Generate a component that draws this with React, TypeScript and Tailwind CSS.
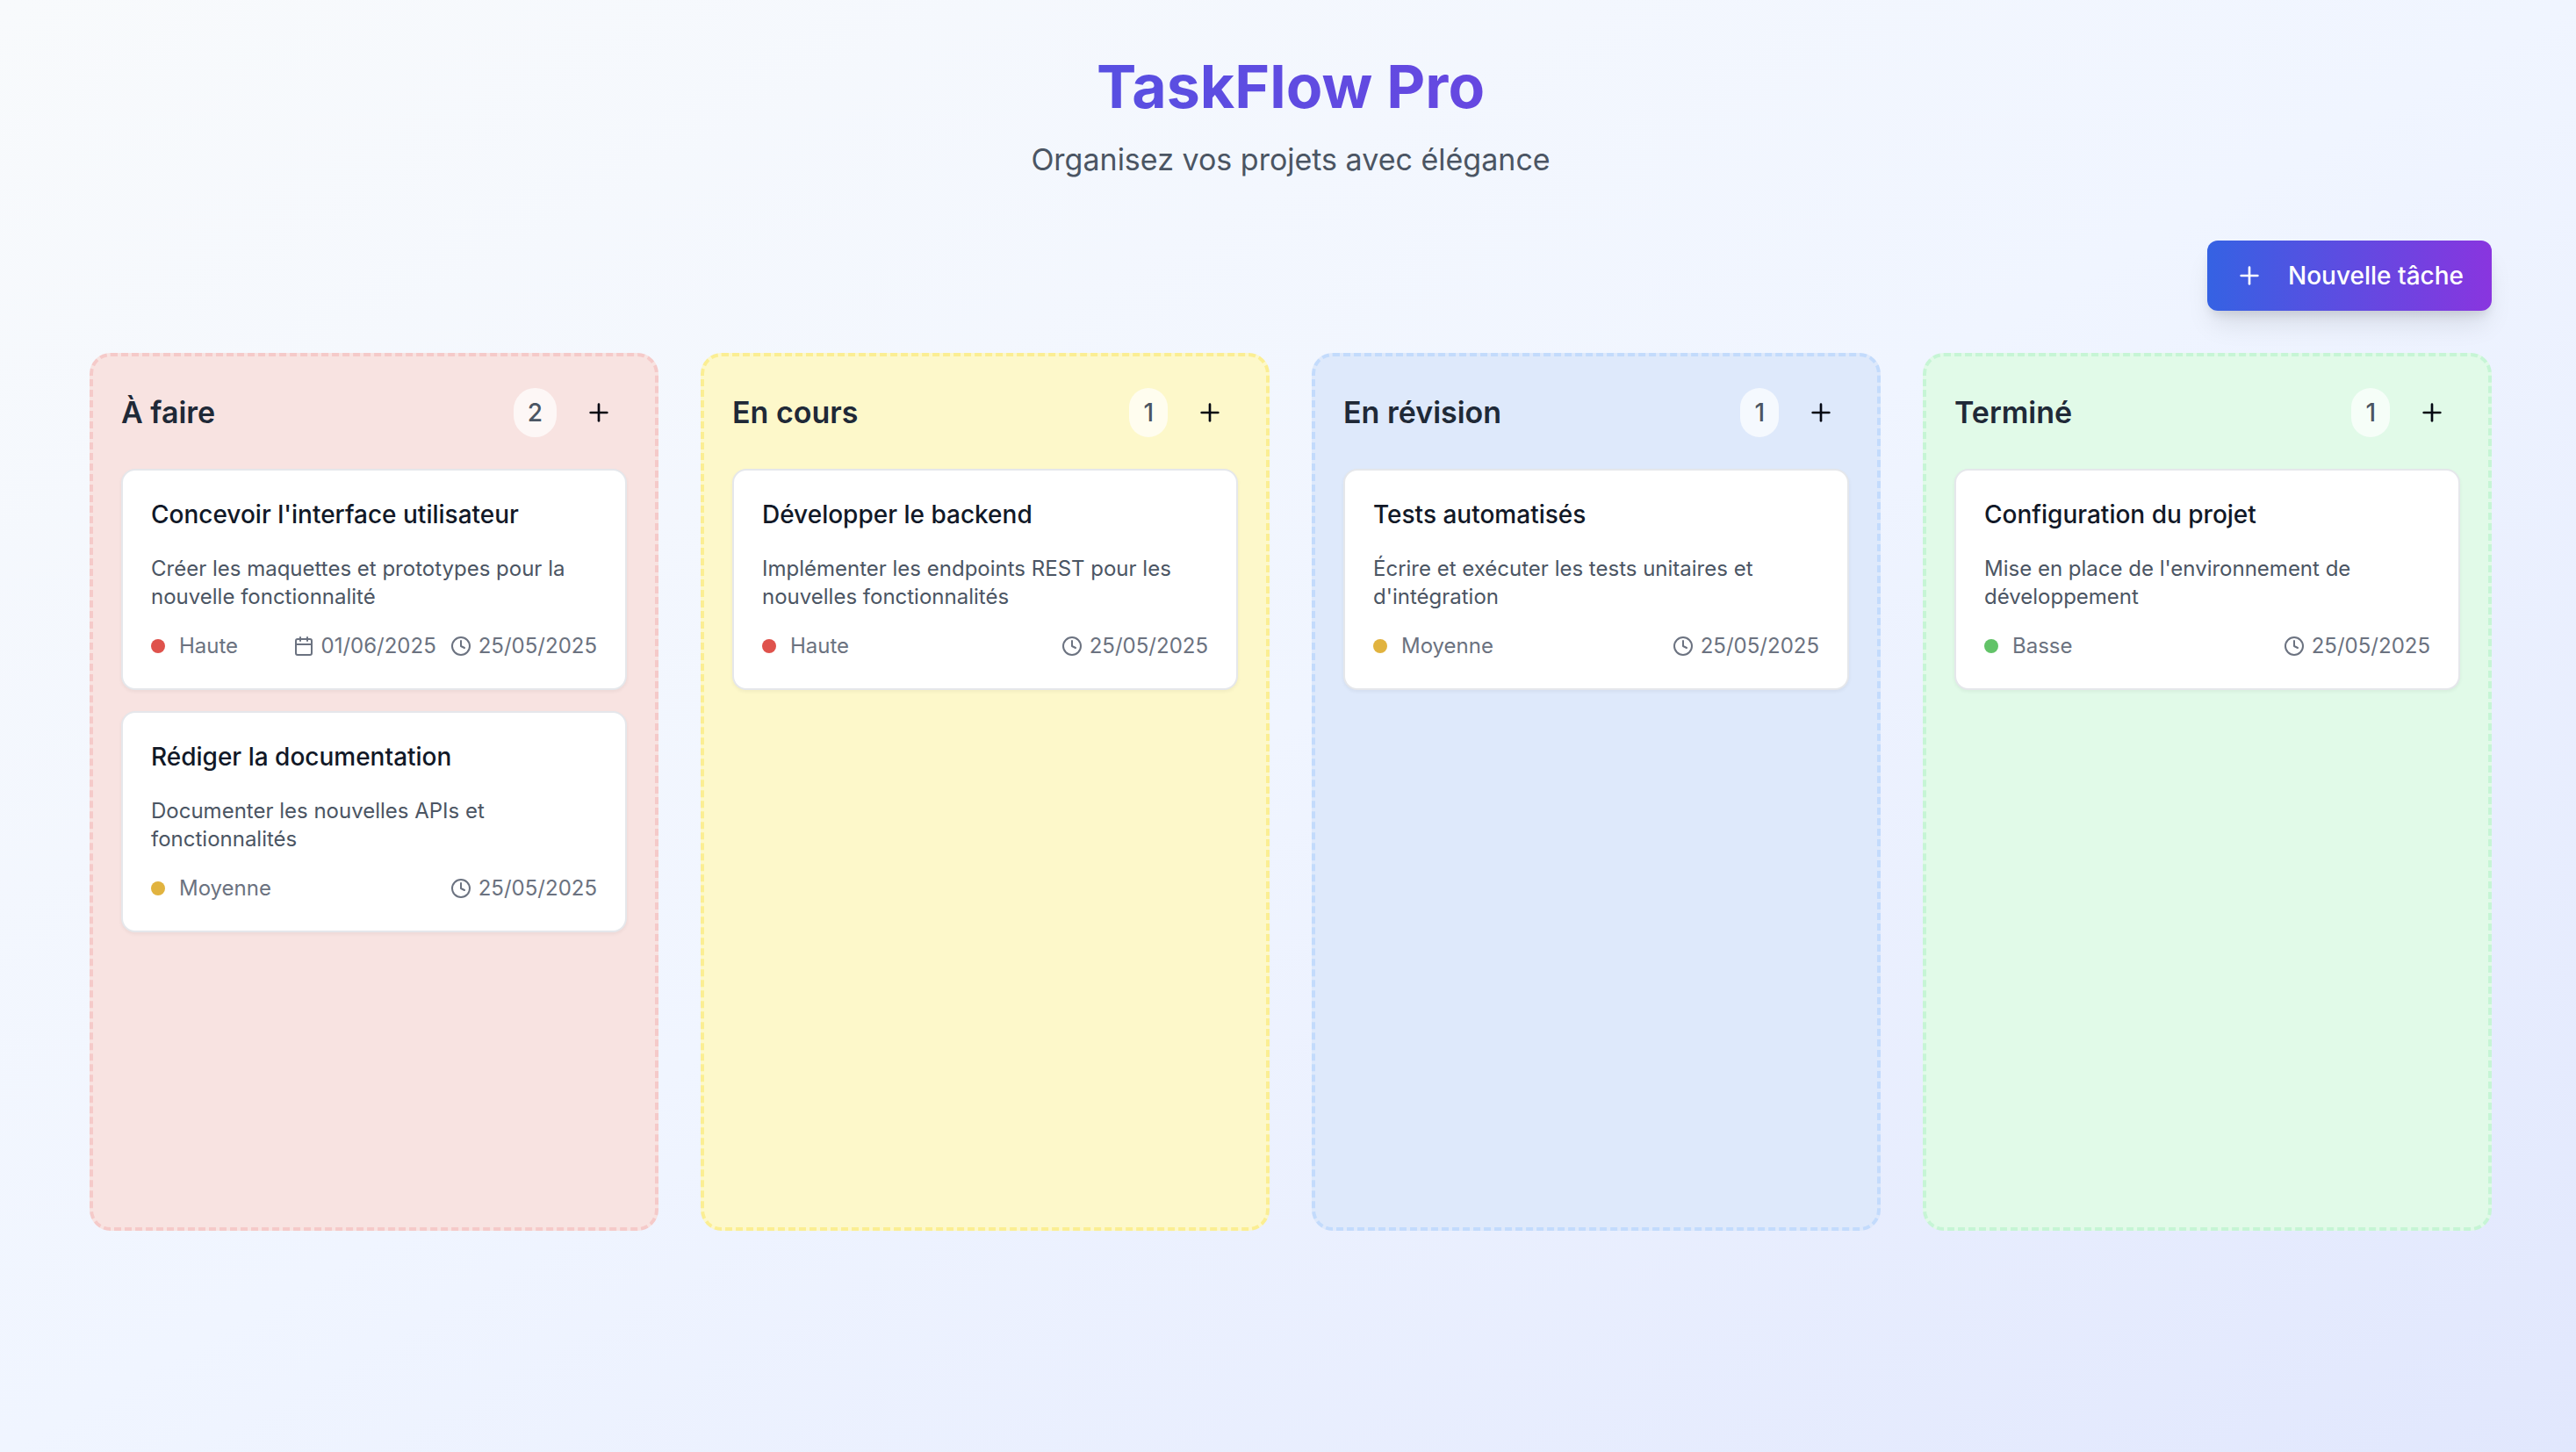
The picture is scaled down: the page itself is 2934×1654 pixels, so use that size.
import { Calendar, Clock, Plus } from "lucide-react";

type Priority = "haute" | "moyenne" | "basse";

interface Task {
  title: string;
  description: string;
  priority: Priority;
  due?: string;
  created: string;
}

interface Column {
  id: string;
  title: string;
  tone: string;
  tasks: Task[];
}

const priorities: Record<Priority, { label: string; dot: string }> = {
  haute: { label: "Haute", dot: "bg-[#df524c]" },
  moyenne: { label: "Moyenne", dot: "bg-[#e1b33f]" },
  basse: { label: "Basse", dot: "bg-[#62c368]" },
};

const columns: Column[] = [
  {
    id: "todo",
    title: "À faire",
    tone: "bg-[#f8e3e1] border-[#f5cac9]",
    tasks: [
      {
        title: "Concevoir l'interface utilisateur",
        description: "Créer les maquettes et prototypes pour la nouvelle fonctionnalité",
        priority: "haute",
        due: "01/06/2025",
        created: "25/05/2025",
      },
      {
        title: "Rédiger la documentation",
        description: "Documenter les nouvelles APIs et fonctionnalités",
        priority: "moyenne",
        created: "25/05/2025",
      },
    ],
  },
  {
    id: "doing",
    title: "En cours",
    tone: "bg-[#fdf8ca] border-[#fbee93]",
    tasks: [
      {
        title: "Développer le backend",
        description: "Implémenter les endpoints REST pour les nouvelles fonctionnalités",
        priority: "haute",
        created: "25/05/2025",
      },
    ],
  },
  {
    id: "review",
    title: "En révision",
    tone: "bg-[#dee9fb] border-[#c3dbfc]",
    tasks: [
      {
        title: "Tests automatisés",
        description: "Écrire et exécuter les tests unitaires et d'intégration",
        priority: "moyenne",
        created: "25/05/2025",
      },
    ],
  },
  {
    id: "done",
    title: "Terminé",
    tone: "bg-[#e1fae8] border-[#c6f5d5]",
    tasks: [
      {
        title: "Configuration du projet",
        description: "Mise en place de l'environnement de développement",
        priority: "basse",
        created: "25/05/2025",
      },
    ],
  },
];

function TaskCard({ task }: { task: Task }) {
  const priority = priorities[task.priority];
  return (
    <article className="rounded-2xl border-2 border-gray-200 bg-white p-8 shadow-[0_2px_4px_rgba(0,0,0,0.05)]">
      <h3 className="text-[28px] leading-9 font-medium text-[#111827]">{task.title}</h3>
      <p className="mt-7 text-[24px] leading-8 text-[#4b5563]">{task.description}</p>
      <div className="mt-6 flex items-center justify-between text-[24px] leading-8 text-[#6b7280]">
        <div className="flex items-center gap-4">
          <span className={`size-4 rounded-full ${priority.dot}`} />
          <span>{priority.label}</span>
        </div>
        <div className="flex items-center gap-4">
          {task.due && (
            <div className="flex items-center gap-2">
              <Calendar className="size-6" />
              <time>{task.due}</time>
            </div>
          )}
          <div className="flex items-center gap-2">
            <Clock className="size-6" />
            <time>{task.created}</time>
          </div>
        </div>
      </div>
    </article>
  );
}

function BoardColumn({ column }: { column: Column }) {
  return (
    <section className={`min-h-[1000px] rounded-3xl border-4 border-dashed p-8 ${column.tone}`}>
      <header className="mb-8 flex items-center justify-between">
        <h2 className="text-[34px] leading-[56px] font-semibold text-[#1f2937]">{column.title}</h2>
        <div className="flex items-center gap-4">
          <span className="rounded-full bg-white/70 px-4 py-2 text-[28px] leading-10 font-medium text-[#4b5563]">
            {column.tasks.length}
          </span>
          <button
            type="button"
            aria-label={`Ajouter une tâche dans ${column.title}`}
            className="flex size-16 items-center justify-center rounded-xl text-gray-950"
          >
            <Plus className="size-8" />
          </button>
        </div>
      </header>
      <div className="flex flex-col gap-6">
        {column.tasks.map((task) => (
          <TaskCard key={task.title} task={task} />
        ))}
      </div>
    </section>
  );
}

export default function App() {
  return (
    <main className="min-h-screen bg-linear-to-br/srgb from-[#f8fafc] via-[#f0f5ff] to-[#e1e7fd] pt-[54px] pr-24 pb-16 pl-[102px] font-['Inter',sans-serif]">
      <header className="mb-16 text-center">
        <h1 className="bg-linear-to-r/srgb from-[#3562e3] to-[#8935df] bg-clip-text text-[68px] leading-[88px] font-bold text-transparent">
          TaskFlow Pro
        </h1>
        <p className="mt-3 text-[34px] leading-[56px] text-[#4b5563]">Organisez vos projets avec élégance</p>
      </header>
      <div className="mb-12 flex justify-end">
        <button
          type="button"
          className="flex h-20 items-center gap-7 rounded-xl bg-linear-to-r/srgb from-[#3562e3] to-[#8935df] px-8 text-[28px] leading-10 font-medium text-white shadow-[0_20px_30px_-6px_rgba(0,0,0,0.1),0_8px_12px_-4px_rgba(0,0,0,0.1)]"
        >
          <Plus className="size-8" />
          Nouvelle tâche
        </button>
      </div>
      <div className="grid grid-cols-4 gap-12">
        {columns.map((column) => (
          <BoardColumn key={column.id} column={column} />
        ))}
      </div>
    </main>
  );
}
